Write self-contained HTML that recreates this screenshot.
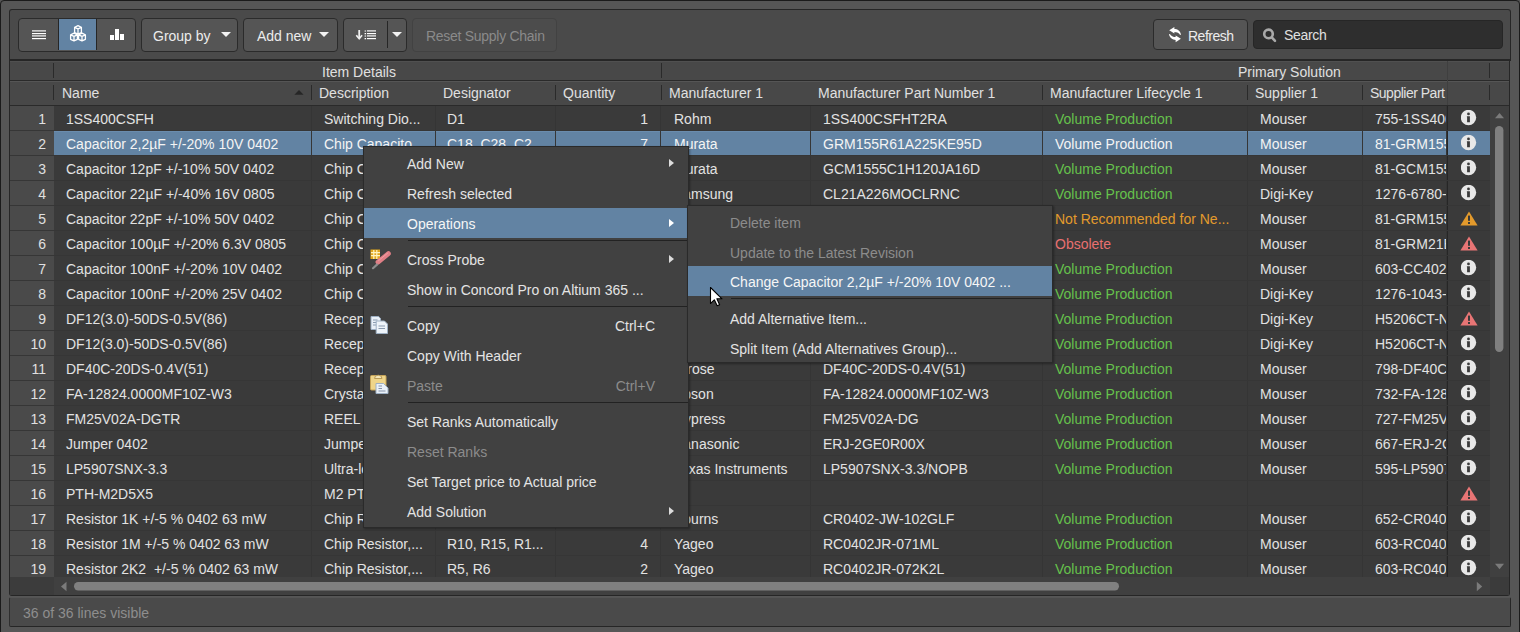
<!DOCTYPE html>
<html><head><meta charset="utf-8">
<style>
*{box-sizing:border-box;margin:0;padding:0}
html,body{width:1520px;height:632px;overflow:hidden;background:#565656;font-family:"Liberation Sans",sans-serif;font-size:14px;color:#e2e2e2}
.abs{position:absolute}
#frame{position:absolute;left:0;top:0;width:1520px;height:700px;border:1px solid #1b1b1b;border-radius:4px;background:#565656}
#tb{position:absolute;left:9px;top:9px;width:1502px;height:52px;background:#4a4a4a;border:1px solid #262626;border-bottom-width:2px;border-radius:3px 3px 0 0}
.btn{position:absolute;background:#555;border:1px solid #2b2b2b;border-radius:4px;color:#ececec;white-space:nowrap;overflow:hidden}
.btn .t{position:absolute;line-height:16px}
.tri{position:absolute;width:0;height:0;border-left:5px solid transparent;border-right:5px solid transparent;border-top:5px solid #f2f2f2}
#tbl{position:absolute;left:9px;top:61px;width:1501px;height:535px;background:#3a3a3a;border:1px solid #262626;border-top:0;border-radius:0 0 3px 3px}
.hdr{position:absolute;left:10px;width:1499px;background:#484848}
.ht{position:absolute;top:81px;height:24px;line-height:25px;white-space:nowrap;overflow:hidden;color:#e0e0e0}
.hdiv{position:absolute;top:85px;width:1px;height:15px;background:#2a2a2a}
.rn{position:absolute;left:10px;width:44px;height:24px;background:#4a4a4a;text-align:right;padding-right:8px;line-height:26px;color:#e0e0e0}
.hl1{position:absolute;left:10px;width:1480px;height:1px;background:#363636}
.c{position:absolute;height:24px;line-height:24px;white-space:nowrap;overflow:hidden;border-right:1px solid #353535}
.c span{position:absolute;left:12px;top:1px}
.c-qty span{left:auto;right:12px}
.c-mfr span{left:13px}
.c-desig span{left:11px}
.c-sp span{left:12px}
.lg{color:#66c24c} .lo{color:#e39a2c} .lr{color:#e87070}
.c.s{background:#6283a3;border-right-color:#363636;color:#f4f4f4;box-shadow:inset 0 1px 0 #6a8cad}
.ic{position:absolute;left:1447px;width:43px;height:24px;background:#3a3a3a;border-left:1px solid #262626}
.ic.s{background:#6283a3}
.ic svg{position:absolute;left:13px;top:4px}
.ic-wo svg,.ic-wr svg{left:12px;top:5px}
.menu{position:absolute;background:#414141;border:1px solid #2a2a2a;box-shadow:1px 1px 2px rgba(0,0,0,0.35)}
.mi{position:absolute;left:0;height:30px;line-height:30px;white-space:nowrap;color:#e4e4e4}
.mi span{position:absolute;top:1px}
.mi.dis{color:#8c8c8c}
.mi.hl{background:#6283a3;color:#f6f6f6}
.sep{position:absolute;height:1px;background:#222}
.hl .arr{border-left-color:#fff}
.arr{position:absolute;width:0;height:0;border-top:4.5px solid transparent;border-bottom:4.5px solid transparent;border-left:5px solid #dcdcdc}
</style></head><body>
<div id="frame"></div>
<div id="tb"></div>
<!-- toolbar buttons -->
<div class="btn" style="left:18px;top:18px;width:118px;height:34px;"></div>
<div class="abs" style="left:59px;top:19px;width:37px;height:31px;background:#6283a3"></div>
<div class="abs" style="left:58px;top:19px;width:1px;height:31px;background:#262626"></div>
<div class="abs" style="left:96px;top:19px;width:1px;height:31px;background:#262626"></div>
<div class="btn" style="left:141px;top:18px;width:97px;height:34px"><span class="t" style="left:11px;top:9px">Group by</span><i class="tri" style="left:79px;top:12.5px"></i></div>
<div class="btn" style="left:243px;top:18px;width:95px;height:34px"><span class="t" style="left:13px;top:9px">Add new</span><i class="tri" style="left:75px;top:12.5px"></i></div>
<div class="btn" style="left:343px;top:18px;width:64px;height:34px"><i class="tri" style="left:48px;top:12.5px"></i></div>
<div class="abs" style="left:387px;top:21px;width:1px;height:27px;background:#262626"></div>
<div class="btn" style="left:412px;top:18px;width:145px;height:34px;background:#4c4c4c;border-color:#424242;color:#8a8a8a"><span class="t" style="left:13px;top:9px;letter-spacing:-0.28px">Reset Supply Chain</span></div>
<div class="btn" style="left:1153px;top:19px;width:95px;height:31px"><span class="t" style="left:34px;top:8px;letter-spacing:-0.5px">Refresh</span></div>
<div class="btn" style="left:1253px;top:20px;width:250px;height:29px;background:#2e2e2e;border-color:#262626;border-radius:4px"><span class="t" style="left:30px;top:6px;color:#e0e0e0;letter-spacing:-0.3px">Search</span></div>

<div id="tbl"></div>
<div class="hdr" style="top:61px;height:19px;border-top:1px solid #505050"></div>
<div class="abs" style="left:10px;top:80px;width:1499px;height:1px;background:#2a2a2a"></div>
<div class="hdr" style="top:81px;height:24px;border-top:1px solid #555"></div>
<div class="abs" style="left:10px;top:105px;width:1499px;height:1px;background:#2a2a2a"></div>
<div class="abs" style="left:322px;top:62px;height:19px;line-height:21px;color:#e0e0e0">Item Details</div>
<div class="abs" style="left:1238px;top:62px;height:19px;line-height:21px;color:#e0e0e0">Primary Solution</div>
<div class="abs" style="left:1447px;top:61px;width:1px;height:44px;background:#3f3f3f"></div>
<div class="hdiv" style="left:661px;top:63px;height:15px"></div>
<div class="hdiv" style="left:53px;top:63px;height:15px"></div>
<div class="hdiv" style="left:1489px;top:63px;height:15px"></div>
<div class="ht" style="left:62px;width:249px">Name</div><div class="ht" style="left:319px;width:116px">Description</div><div class="ht" style="left:443px;width:112px">Designator</div><div class="ht" style="left:563px;width:98px">Quantity</div><div class="ht" style="left:669px;width:141px">Manufacturer 1</div><div class="ht" style="left:818px;width:224px">Manufacturer Part Number 1</div><div class="ht" style="left:1050px;width:197px">Manufacturer Lifecycle 1</div><div class="ht" style="left:1255px;width:107px">Supplier 1</div><div class="ht" style="left:1370px;width:77px;letter-spacing:-0.5px">Supplier Part</div><div class="hdiv" style="left:53px"></div><div class="hdiv" style="left:311px"></div><div class="hdiv" style="left:555px"></div><div class="hdiv" style="left:661px"></div><div class="hdiv" style="left:1042px"></div><div class="hdiv" style="left:1247px"></div><div class="hdiv" style="left:1362px"></div><div class="hdiv" style="left:1489px"></div>
<div id="body" class="abs" style="left:0;top:0;width:1520px;height:577px;overflow:hidden">
<div class="rn" style="top:106px">1</div><div class="hl1" style="top:130px"></div><div class="c c-name" style="left:54px;top:106px;width:258px"><span>1SS400CSFH</span></div><div class="c c-desc" style="left:312px;top:106px;width:124px"><span>Switching Dio...</span></div><div class="c c-desig" style="left:436px;top:106px;width:120px"><span>D1</span></div><div class="c c-qty" style="left:556px;top:106px;width:105px"><span>1</span></div><div class="c c-mfr" style="left:661px;top:106px;width:150px"><span>Rohm</span></div><div class="c c-mpn" style="left:811px;top:106px;width:232px"><span>1SS400CSFHT2RA</span></div><div class="c c-life lg" style="left:1043px;top:106px;width:205px"><span>Volume Production</span></div><div class="c c-sup" style="left:1248px;top:106px;width:115px"><span>Mouser</span></div><div class="c c-sp" style="left:1363px;top:106px;width:84px"><span>755-1SS400CSFHT2RA</span></div><div class="ic ic-i" style="top:106px"><svg width="16" height="16" viewBox="0 0 16 16"><circle cx="7.5" cy="7.5" r="7.7" fill="#e8e8e8"/><circle cx="7.5" cy="3.9" r="1.4" fill="#3a3a3a"/><path d="M5.9 6.2H8.9V12.3H6.1V7.3H5.9Z" fill="#3a3a3a"/></svg></div><div class="rn" style="top:131px">2</div><div class="hl1" style="top:155px"></div><div class="c c-name s" style="left:54px;top:131px;width:258px"><span>Capacitor 2,2µF +/-20% 10V 0402</span></div><div class="c c-desc s" style="left:312px;top:131px;width:124px"><span>Chip Capacito...</span></div><div class="c c-desig s" style="left:436px;top:131px;width:120px"><span>C18, C28, C2...</span></div><div class="c c-qty s" style="left:556px;top:131px;width:105px"><span>7</span></div><div class="c c-mfr s" style="left:661px;top:131px;width:150px"><span>Murata</span></div><div class="c c-mpn s" style="left:811px;top:131px;width:232px"><span>GRM155R61A225KE95D</span></div><div class="c c-life s" style="left:1043px;top:131px;width:205px"><span>Volume Production</span></div><div class="c c-sup s" style="left:1248px;top:131px;width:115px"><span>Mouser</span></div><div class="c c-sp s" style="left:1363px;top:131px;width:84px"><span>81-GRM155R61A225KE95D</span></div><div class="ic ic-i s" style="top:131px"><svg width="16" height="16" viewBox="0 0 16 16"><circle cx="7.5" cy="7.5" r="7.7" fill="#e8e8e8"/><circle cx="7.5" cy="3.9" r="1.4" fill="#3a3a3a"/><path d="M5.9 6.2H8.9V12.3H6.1V7.3H5.9Z" fill="#3a3a3a"/></svg></div><div class="rn" style="top:156px">3</div><div class="hl1" style="top:180px"></div><div class="c c-name" style="left:54px;top:156px;width:258px"><span>Capacitor 12pF +/-10% 50V 0402</span></div><div class="c c-desc" style="left:312px;top:156px;width:124px"><span>Chip Capacitor</span></div><div class="c c-desig" style="left:436px;top:156px;width:120px"><span>C1, C2</span></div><div class="c c-qty" style="left:556px;top:156px;width:105px"><span>2</span></div><div class="c c-mfr" style="left:661px;top:156px;width:150px"><span>Murata</span></div><div class="c c-mpn" style="left:811px;top:156px;width:232px"><span>GCM1555C1H120JA16D</span></div><div class="c c-life lg" style="left:1043px;top:156px;width:205px"><span>Volume Production</span></div><div class="c c-sup" style="left:1248px;top:156px;width:115px"><span>Mouser</span></div><div class="c c-sp" style="left:1363px;top:156px;width:84px"><span>81-GCM1555C1H120JA16D</span></div><div class="ic ic-i" style="top:156px"><svg width="16" height="16" viewBox="0 0 16 16"><circle cx="7.5" cy="7.5" r="7.7" fill="#e8e8e8"/><circle cx="7.5" cy="3.9" r="1.4" fill="#3a3a3a"/><path d="M5.9 6.2H8.9V12.3H6.1V7.3H5.9Z" fill="#3a3a3a"/></svg></div><div class="rn" style="top:181px">4</div><div class="hl1" style="top:205px"></div><div class="c c-name" style="left:54px;top:181px;width:258px"><span>Capacitor 22µF +/-40% 16V 0805</span></div><div class="c c-desc" style="left:312px;top:181px;width:124px"><span>Chip Capacitor</span></div><div class="c c-desig" style="left:436px;top:181px;width:120px"><span>C3</span></div><div class="c c-qty" style="left:556px;top:181px;width:105px"><span>1</span></div><div class="c c-mfr" style="left:661px;top:181px;width:150px"><span>Samsung</span></div><div class="c c-mpn" style="left:811px;top:181px;width:232px"><span>CL21A226MOCLRNC</span></div><div class="c c-life lg" style="left:1043px;top:181px;width:205px"><span>Volume Production</span></div><div class="c c-sup" style="left:1248px;top:181px;width:115px"><span>Digi-Key</span></div><div class="c c-sp" style="left:1363px;top:181px;width:84px"><span>1276-6780-1-ND</span></div><div class="ic ic-i" style="top:181px"><svg width="16" height="16" viewBox="0 0 16 16"><circle cx="7.5" cy="7.5" r="7.7" fill="#e8e8e8"/><circle cx="7.5" cy="3.9" r="1.4" fill="#3a3a3a"/><path d="M5.9 6.2H8.9V12.3H6.1V7.3H5.9Z" fill="#3a3a3a"/></svg></div><div class="rn" style="top:206px">5</div><div class="hl1" style="top:230px"></div><div class="c c-name" style="left:54px;top:206px;width:258px"><span>Capacitor 22pF +/-10% 50V 0402</span></div><div class="c c-desc" style="left:312px;top:206px;width:124px"><span>Chip Capacitor</span></div><div class="c c-desig" style="left:436px;top:206px;width:120px"><span>C4</span></div><div class="c c-qty" style="left:556px;top:206px;width:105px"><span>1</span></div><div class="c c-mfr" style="left:661px;top:206px;width:150px"><span>Murata</span></div><div class="c c-mpn" style="left:811px;top:206px;width:232px"><span>GRM1555C1H220JA01D</span></div><div class="c c-life lo" style="left:1043px;top:206px;width:205px"><span>Not Recommended for Ne...</span></div><div class="c c-sup" style="left:1248px;top:206px;width:115px"><span>Mouser</span></div><div class="c c-sp" style="left:1363px;top:206px;width:84px"><span>81-GRM1555C1H220JA01D</span></div><div class="ic ic-wo" style="top:206px"><svg width="18" height="15" viewBox="0 0 18 15"><path d="M9 0.5L17.6 14.6H0.4z" fill="#e39a2c"/><rect x="8" y="4.6" width="2" height="5.2" fill="#3a3a3a"/><rect x="8" y="11" width="2" height="2" fill="#3a3a3a"/></svg></div><div class="rn" style="top:231px">6</div><div class="hl1" style="top:255px"></div><div class="c c-name" style="left:54px;top:231px;width:258px"><span>Capacitor 100µF +/-20% 6.3V 0805</span></div><div class="c c-desc" style="left:312px;top:231px;width:124px"><span>Chip Capacitor</span></div><div class="c c-desig" style="left:436px;top:231px;width:120px"><span>C5</span></div><div class="c c-qty" style="left:556px;top:231px;width:105px"><span>1</span></div><div class="c c-mfr" style="left:661px;top:231px;width:150px"><span>Murata</span></div><div class="c c-mpn" style="left:811px;top:231px;width:232px"><span>GRM21BR60J107ME15L</span></div><div class="c c-life lr" style="left:1043px;top:231px;width:205px"><span>Obsolete</span></div><div class="c c-sup" style="left:1248px;top:231px;width:115px"><span>Mouser</span></div><div class="c c-sp" style="left:1363px;top:231px;width:84px"><span>81-GRM21BR60J107ME15L</span></div><div class="ic ic-wr" style="top:231px"><svg width="18" height="15" viewBox="0 0 18 15"><path d="M9 0.5L17.6 14.6H0.4z" fill="#e87575"/><rect x="8" y="4.6" width="2" height="5.2" fill="#3a3a3a"/><rect x="8" y="11" width="2" height="2" fill="#3a3a3a"/></svg></div><div class="rn" style="top:256px">7</div><div class="hl1" style="top:280px"></div><div class="c c-name" style="left:54px;top:256px;width:258px"><span>Capacitor 100nF +/-20% 10V 0402</span></div><div class="c c-desc" style="left:312px;top:256px;width:124px"><span>Chip Capacitor</span></div><div class="c c-desig" style="left:436px;top:256px;width:120px"><span>C6</span></div><div class="c c-qty" style="left:556px;top:256px;width:105px"><span>1</span></div><div class="c c-mfr" style="left:661px;top:256px;width:150px"><span>Murata</span></div><div class="c c-mpn" style="left:811px;top:256px;width:232px"><span>CC0402MRX5R6BB104</span></div><div class="c c-life lg" style="left:1043px;top:256px;width:205px"><span>Volume Production</span></div><div class="c c-sup" style="left:1248px;top:256px;width:115px"><span>Mouser</span></div><div class="c c-sp" style="left:1363px;top:256px;width:84px"><span>603-CC402MRX5R6BB104</span></div><div class="ic ic-i" style="top:256px"><svg width="16" height="16" viewBox="0 0 16 16"><circle cx="7.5" cy="7.5" r="7.7" fill="#e8e8e8"/><circle cx="7.5" cy="3.9" r="1.4" fill="#3a3a3a"/><path d="M5.9 6.2H8.9V12.3H6.1V7.3H5.9Z" fill="#3a3a3a"/></svg></div><div class="rn" style="top:281px">8</div><div class="hl1" style="top:305px"></div><div class="c c-name" style="left:54px;top:281px;width:258px"><span>Capacitor 100nF +/-20% 25V 0402</span></div><div class="c c-desc" style="left:312px;top:281px;width:124px"><span>Chip Capacitor</span></div><div class="c c-desig" style="left:436px;top:281px;width:120px"><span>C7</span></div><div class="c c-qty" style="left:556px;top:281px;width:105px"><span>1</span></div><div class="c c-mfr" style="left:661px;top:281px;width:150px"><span>Samsung</span></div><div class="c c-mpn" style="left:811px;top:281px;width:232px"><span>CL05A104MA5NNNC</span></div><div class="c c-life lg" style="left:1043px;top:281px;width:205px"><span>Volume Production</span></div><div class="c c-sup" style="left:1248px;top:281px;width:115px"><span>Digi-Key</span></div><div class="c c-sp" style="left:1363px;top:281px;width:84px"><span>1276-1043-1-ND</span></div><div class="ic ic-i" style="top:281px"><svg width="16" height="16" viewBox="0 0 16 16"><circle cx="7.5" cy="7.5" r="7.7" fill="#e8e8e8"/><circle cx="7.5" cy="3.9" r="1.4" fill="#3a3a3a"/><path d="M5.9 6.2H8.9V12.3H6.1V7.3H5.9Z" fill="#3a3a3a"/></svg></div><div class="rn" style="top:306px">9</div><div class="hl1" style="top:330px"></div><div class="c c-name" style="left:54px;top:306px;width:258px"><span>DF12(3.0)-50DS-0.5V(86)</span></div><div class="c c-desc" style="left:312px;top:306px;width:124px"><span>Receptacle</span></div><div class="c c-desig" style="left:436px;top:306px;width:120px"><span>J1</span></div><div class="c c-qty" style="left:556px;top:306px;width:105px"><span>1</span></div><div class="c c-mfr" style="left:661px;top:306px;width:150px"><span>Hirose</span></div><div class="c c-mpn" style="left:811px;top:306px;width:232px"><span>DF12(3.0)-50DS-0.5V(86)</span></div><div class="c c-life lg" style="left:1043px;top:306px;width:205px"><span>Volume Production</span></div><div class="c c-sup" style="left:1248px;top:306px;width:115px"><span>Digi-Key</span></div><div class="c c-sp" style="left:1363px;top:306px;width:84px"><span>H5206CT-ND</span></div><div class="ic ic-wr" style="top:306px"><svg width="18" height="15" viewBox="0 0 18 15"><path d="M9 0.5L17.6 14.6H0.4z" fill="#e87575"/><rect x="8" y="4.6" width="2" height="5.2" fill="#3a3a3a"/><rect x="8" y="11" width="2" height="2" fill="#3a3a3a"/></svg></div><div class="rn" style="top:331px">10</div><div class="hl1" style="top:355px"></div><div class="c c-name" style="left:54px;top:331px;width:258px"><span>DF12(3.0)-50DS-0.5V(86)</span></div><div class="c c-desc" style="left:312px;top:331px;width:124px"><span>Receptacle</span></div><div class="c c-desig" style="left:436px;top:331px;width:120px"><span>J2</span></div><div class="c c-qty" style="left:556px;top:331px;width:105px"><span>1</span></div><div class="c c-mfr" style="left:661px;top:331px;width:150px"><span>Hirose</span></div><div class="c c-mpn" style="left:811px;top:331px;width:232px"><span>DF12(3.0)-50DS-0.5V(86)</span></div><div class="c c-life lg" style="left:1043px;top:331px;width:205px"><span>Volume Production</span></div><div class="c c-sup" style="left:1248px;top:331px;width:115px"><span>Digi-Key</span></div><div class="c c-sp" style="left:1363px;top:331px;width:84px"><span>H5206CT-ND</span></div><div class="ic ic-i" style="top:331px"><svg width="16" height="16" viewBox="0 0 16 16"><circle cx="7.5" cy="7.5" r="7.7" fill="#e8e8e8"/><circle cx="7.5" cy="3.9" r="1.4" fill="#3a3a3a"/><path d="M5.9 6.2H8.9V12.3H6.1V7.3H5.9Z" fill="#3a3a3a"/></svg></div><div class="rn" style="top:356px">11</div><div class="hl1" style="top:380px"></div><div class="c c-name" style="left:54px;top:356px;width:258px"><span>DF40C-20DS-0.4V(51)</span></div><div class="c c-desc" style="left:312px;top:356px;width:124px"><span>Receptacle</span></div><div class="c c-desig" style="left:436px;top:356px;width:120px"><span>J3</span></div><div class="c c-qty" style="left:556px;top:356px;width:105px"><span>1</span></div><div class="c c-mfr" style="left:661px;top:356px;width:150px"><span>Hirose</span></div><div class="c c-mpn" style="left:811px;top:356px;width:232px"><span>DF40C-20DS-0.4V(51)</span></div><div class="c c-life lg" style="left:1043px;top:356px;width:205px"><span>Volume Production</span></div><div class="c c-sup" style="left:1248px;top:356px;width:115px"><span>Mouser</span></div><div class="c c-sp" style="left:1363px;top:356px;width:84px"><span>798-DF40C-20DS-0.4V51</span></div><div class="ic ic-i" style="top:356px"><svg width="16" height="16" viewBox="0 0 16 16"><circle cx="7.5" cy="7.5" r="7.7" fill="#e8e8e8"/><circle cx="7.5" cy="3.9" r="1.4" fill="#3a3a3a"/><path d="M5.9 6.2H8.9V12.3H6.1V7.3H5.9Z" fill="#3a3a3a"/></svg></div><div class="rn" style="top:381px">12</div><div class="hl1" style="top:405px"></div><div class="c c-name" style="left:54px;top:381px;width:258px"><span>FA-12824.0000MF10Z-W3</span></div><div class="c c-desc" style="left:312px;top:381px;width:124px"><span>Crystal</span></div><div class="c c-desig" style="left:436px;top:381px;width:120px"><span>Y1</span></div><div class="c c-qty" style="left:556px;top:381px;width:105px"><span>1</span></div><div class="c c-mfr" style="left:661px;top:381px;width:150px"><span>Epson</span></div><div class="c c-mpn" style="left:811px;top:381px;width:232px"><span>FA-12824.0000MF10Z-W3</span></div><div class="c c-life lg" style="left:1043px;top:381px;width:205px"><span>Volume Production</span></div><div class="c c-sup" style="left:1248px;top:381px;width:115px"><span>Mouser</span></div><div class="c c-sp" style="left:1363px;top:381px;width:84px"><span>732-FA-128MF10ZW3</span></div><div class="ic ic-i" style="top:381px"><svg width="16" height="16" viewBox="0 0 16 16"><circle cx="7.5" cy="7.5" r="7.7" fill="#e8e8e8"/><circle cx="7.5" cy="3.9" r="1.4" fill="#3a3a3a"/><path d="M5.9 6.2H8.9V12.3H6.1V7.3H5.9Z" fill="#3a3a3a"/></svg></div><div class="rn" style="top:406px">13</div><div class="hl1" style="top:430px"></div><div class="c c-name" style="left:54px;top:406px;width:258px"><span>FM25V02A-DGTR</span></div><div class="c c-desc" style="left:312px;top:406px;width:124px"><span>REEL / F-RAM</span></div><div class="c c-desig" style="left:436px;top:406px;width:120px"><span>U1</span></div><div class="c c-qty" style="left:556px;top:406px;width:105px"><span>1</span></div><div class="c c-mfr" style="left:661px;top:406px;width:150px"><span>Cypress</span></div><div class="c c-mpn" style="left:811px;top:406px;width:232px"><span>FM25V02A-DG</span></div><div class="c c-life lg" style="left:1043px;top:406px;width:205px"><span>Volume Production</span></div><div class="c c-sup" style="left:1248px;top:406px;width:115px"><span>Mouser</span></div><div class="c c-sp" style="left:1363px;top:406px;width:84px"><span>727-FM25V02A-DG</span></div><div class="ic ic-i" style="top:406px"><svg width="16" height="16" viewBox="0 0 16 16"><circle cx="7.5" cy="7.5" r="7.7" fill="#e8e8e8"/><circle cx="7.5" cy="3.9" r="1.4" fill="#3a3a3a"/><path d="M5.9 6.2H8.9V12.3H6.1V7.3H5.9Z" fill="#3a3a3a"/></svg></div><div class="rn" style="top:431px">14</div><div class="hl1" style="top:455px"></div><div class="c c-name" style="left:54px;top:431px;width:258px"><span>Jumper 0402</span></div><div class="c c-desc" style="left:312px;top:431px;width:124px"><span>Jumper</span></div><div class="c c-desig" style="left:436px;top:431px;width:120px"><span>R1</span></div><div class="c c-qty" style="left:556px;top:431px;width:105px"><span>1</span></div><div class="c c-mfr" style="left:661px;top:431px;width:150px"><span>Panasonic</span></div><div class="c c-mpn" style="left:811px;top:431px;width:232px"><span>ERJ-2GE0R00X</span></div><div class="c c-life lg" style="left:1043px;top:431px;width:205px"><span>Volume Production</span></div><div class="c c-sup" style="left:1248px;top:431px;width:115px"><span>Mouser</span></div><div class="c c-sp" style="left:1363px;top:431px;width:84px"><span>667-ERJ-2GE0R00X</span></div><div class="ic ic-i" style="top:431px"><svg width="16" height="16" viewBox="0 0 16 16"><circle cx="7.5" cy="7.5" r="7.7" fill="#e8e8e8"/><circle cx="7.5" cy="3.9" r="1.4" fill="#3a3a3a"/><path d="M5.9 6.2H8.9V12.3H6.1V7.3H5.9Z" fill="#3a3a3a"/></svg></div><div class="rn" style="top:456px">15</div><div class="hl1" style="top:480px"></div><div class="c c-name" style="left:54px;top:456px;width:258px"><span>LP5907SNX-3.3</span></div><div class="c c-desc" style="left:312px;top:456px;width:124px"><span>Ultra-low noise LDO</span></div><div class="c c-desig" style="left:436px;top:456px;width:120px"><span>U2</span></div><div class="c c-qty" style="left:556px;top:456px;width:105px"><span>1</span></div><div class="c c-mfr" style="left:661px;top:456px;width:150px"><span>Texas Instruments</span></div><div class="c c-mpn" style="left:811px;top:456px;width:232px"><span>LP5907SNX-3.3/NOPB</span></div><div class="c c-life lg" style="left:1043px;top:456px;width:205px"><span>Volume Production</span></div><div class="c c-sup" style="left:1248px;top:456px;width:115px"><span>Mouser</span></div><div class="c c-sp" style="left:1363px;top:456px;width:84px"><span>595-LP5907SNX-3.3NOPB</span></div><div class="ic ic-i" style="top:456px"><svg width="16" height="16" viewBox="0 0 16 16"><circle cx="7.5" cy="7.5" r="7.7" fill="#e8e8e8"/><circle cx="7.5" cy="3.9" r="1.4" fill="#3a3a3a"/><path d="M5.9 6.2H8.9V12.3H6.1V7.3H5.9Z" fill="#3a3a3a"/></svg></div><div class="rn" style="top:481px">16</div><div class="hl1" style="top:505px"></div><div class="c c-name" style="left:54px;top:481px;width:258px"><span>PTH-M2D5X5</span></div><div class="c c-desc" style="left:312px;top:481px;width:124px"><span>M2 PTH</span></div><div class="c c-desig" style="left:436px;top:481px;width:120px"><span>H1</span></div><div class="c c-qty" style="left:556px;top:481px;width:105px"><span>1</span></div><div class="c c-mfr" style="left:661px;top:481px;width:150px"><span></span></div><div class="c c-mpn" style="left:811px;top:481px;width:232px"><span></span></div><div class="c c-life lg" style="left:1043px;top:481px;width:205px"><span></span></div><div class="c c-sup" style="left:1248px;top:481px;width:115px"><span></span></div><div class="c c-sp" style="left:1363px;top:481px;width:84px"><span></span></div><div class="ic ic-wr" style="top:481px"><svg width="18" height="15" viewBox="0 0 18 15"><path d="M9 0.5L17.6 14.6H0.4z" fill="#e87575"/><rect x="8" y="4.6" width="2" height="5.2" fill="#3a3a3a"/><rect x="8" y="11" width="2" height="2" fill="#3a3a3a"/></svg></div><div class="rn" style="top:506px">17</div><div class="hl1" style="top:530px"></div><div class="c c-name" style="left:54px;top:506px;width:258px"><span>Resistor 1K +/-5 % 0402 63 mW</span></div><div class="c c-desc" style="left:312px;top:506px;width:124px"><span>Chip Resistor</span></div><div class="c c-desig" style="left:436px;top:506px;width:120px"><span>R2</span></div><div class="c c-qty" style="left:556px;top:506px;width:105px"><span>1</span></div><div class="c c-mfr" style="left:661px;top:506px;width:150px"><span>Bourns</span></div><div class="c c-mpn" style="left:811px;top:506px;width:232px"><span>CR0402-JW-102GLF</span></div><div class="c c-life lg" style="left:1043px;top:506px;width:205px"><span>Volume Production</span></div><div class="c c-sup" style="left:1248px;top:506px;width:115px"><span>Mouser</span></div><div class="c c-sp" style="left:1363px;top:506px;width:84px"><span>652-CR0402-JW-102GLF</span></div><div class="ic ic-i" style="top:506px"><svg width="16" height="16" viewBox="0 0 16 16"><circle cx="7.5" cy="7.5" r="7.7" fill="#e8e8e8"/><circle cx="7.5" cy="3.9" r="1.4" fill="#3a3a3a"/><path d="M5.9 6.2H8.9V12.3H6.1V7.3H5.9Z" fill="#3a3a3a"/></svg></div><div class="rn" style="top:531px">18</div><div class="hl1" style="top:555px"></div><div class="c c-name" style="left:54px;top:531px;width:258px"><span>Resistor 1M +/-5 % 0402 63 mW</span></div><div class="c c-desc" style="left:312px;top:531px;width:124px"><span>Chip Resistor,...</span></div><div class="c c-desig" style="left:436px;top:531px;width:120px"><span>R10, R15, R1...</span></div><div class="c c-qty" style="left:556px;top:531px;width:105px"><span>4</span></div><div class="c c-mfr" style="left:661px;top:531px;width:150px"><span>Yageo</span></div><div class="c c-mpn" style="left:811px;top:531px;width:232px"><span>RC0402JR-071ML</span></div><div class="c c-life lg" style="left:1043px;top:531px;width:205px"><span>Volume Production</span></div><div class="c c-sup" style="left:1248px;top:531px;width:115px"><span>Mouser</span></div><div class="c c-sp" style="left:1363px;top:531px;width:84px"><span>603-RC0402JR-071ML</span></div><div class="ic ic-i" style="top:531px"><svg width="16" height="16" viewBox="0 0 16 16"><circle cx="7.5" cy="7.5" r="7.7" fill="#e8e8e8"/><circle cx="7.5" cy="3.9" r="1.4" fill="#3a3a3a"/><path d="M5.9 6.2H8.9V12.3H6.1V7.3H5.9Z" fill="#3a3a3a"/></svg></div><div class="rn" style="top:556px">19</div><div class="hl1" style="top:580px"></div><div class="c c-name" style="left:54px;top:556px;width:258px"><span>Resistor 2K2 &nbsp;+/-5 % 0402 63 mW</span></div><div class="c c-desc" style="left:312px;top:556px;width:124px"><span>Chip Resistor,...</span></div><div class="c c-desig" style="left:436px;top:556px;width:120px"><span>R5, R6</span></div><div class="c c-qty" style="left:556px;top:556px;width:105px"><span>2</span></div><div class="c c-mfr" style="left:661px;top:556px;width:150px"><span>Yageo</span></div><div class="c c-mpn" style="left:811px;top:556px;width:232px"><span>RC0402JR-072K2L</span></div><div class="c c-life lg" style="left:1043px;top:556px;width:205px"><span>Volume Production</span></div><div class="c c-sup" style="left:1248px;top:556px;width:115px"><span>Mouser</span></div><div class="c c-sp" style="left:1363px;top:556px;width:84px"><span>603-RC0402JR-072K2L</span></div><div class="ic ic-i" style="top:556px"><svg width="16" height="16" viewBox="0 0 16 16"><circle cx="7.5" cy="7.5" r="7.7" fill="#e8e8e8"/><circle cx="7.5" cy="3.9" r="1.4" fill="#3a3a3a"/><path d="M5.9 6.2H8.9V12.3H6.1V7.3H5.9Z" fill="#3a3a3a"/></svg></div>
</div>

<!-- icons toolbar -->
<svg class="abs" style="left:0;top:0" width="420" height="60">
 <defs><linearGradient id="lg1" x1="0" y1="0" x2="0" y2="1"><stop offset="0" stop-color="#d8d8d8"/><stop offset="1" stop-color="#9a9a9a"/></linearGradient></defs>
 <rect x="32" y="30" width="14" height="2" fill="url(#lg1)"/><rect x="32" y="33" width="14" height="1.2" fill="#fff"/>
 <rect x="32" y="35" width="14" height="2" fill="url(#lg1)"/><rect x="32" y="38" width="14" height="1.2" fill="#fff"/>
 <g fill="none" stroke="#fff" stroke-width="1.3" stroke-linejoin="round">
  <path d="M74.6 27.3L78 25.7L81.4 27.3V32.6L78 34.2L74.6 32.6Z M74.6 27.3L78 28.9L81.4 27.3 M78 28.9V34.2"/>
  <path d="M70.6 34.8L74 33.2L77.4 34.8V39.3L74 40.9L70.6 39.3Z M70.6 34.8L74 36.4L77.4 34.8 M74 36.4V40.9"/>
  <path d="M78.6 34.8L82 33.2L85.4 34.8V39.3L82 40.9L78.6 39.3Z M78.6 34.8L82 36.4L85.4 34.8 M82 36.4V40.9"/>
 </g>
 <rect x="110" y="35" width="4" height="5" fill="#fff"/><rect x="115" y="29" width="4" height="11" fill="#fff"/><rect x="120" y="34" width="4" height="6" fill="#fff"/>
 <path d="M359.2 30V38" stroke="#f0f0f0" stroke-width="1.8"/><path d="M356.3 35.2L359.2 38.8L362.1 35.2" fill="none" stroke="#f0f0f0" stroke-width="1.6" stroke-linejoin="round"/>
 <rect x="364.6" y="30.3" width="1.5" height="1.5" fill="#ccc"/><rect x="364.6" y="33" width="1.5" height="1.3" fill="#fff"/>
 <rect x="364.6" y="35.3" width="1.5" height="1.5" fill="#ccc"/><rect x="364.6" y="38" width="1.5" height="1.3" fill="#fff"/>
 <rect x="367" y="30" width="9" height="2" fill="url(#lg1)"/><rect x="367" y="33" width="9" height="1.2" fill="#fff"/>
 <rect x="367" y="35" width="9" height="2" fill="url(#lg1)"/><rect x="367" y="38" width="9" height="1.2" fill="#fff"/>
</svg>
<svg class="abs" style="left:1164px;top:24px" width="22" height="22">
 <path d="M5.2 6.3L10.4 2.9L10.4 9.4Z" fill="#fff"/>
 <path d="M10 4.9C13.8 4.9 16.4 6.9 17 10.6L16.1 10.9C15.2 8.8 13.2 7.9 10 7.9Z" fill="#fff"/>
 <path d="M16.9 14.7L11.6 11.4L11.6 18.2Z" fill="#fff"/>
 <path d="M5 10.2C5.6 13.6 8.2 15.9 12 15.9L12 13C9.2 13 6.8 12 5.9 9.9Z" fill="#fff"/>
</svg>
<svg class="abs" style="left:1258px;top:24px" width="22" height="22">
 <circle cx="10.5" cy="9.9" r="4.3" fill="none" stroke="#a9a9a9" stroke-width="2.6"/>
 <path d="M14 13.6L17 16.8" stroke="#a9a9a9" stroke-width="2.6" stroke-linecap="round"/>
</svg>
<!-- sort triangle in Name header -->
<svg class="abs" style="left:290px;top:86px" width="20" height="12"><path d="M4.4 8.8L9 4L13.6 8.8Z" fill="#262626"/></svg>

<!-- vertical scrollbar -->
<div class="abs" style="left:1490px;top:106px;width:19px;height:471px;background:#404040"></div>
<svg class="abs" style="left:1490px;top:106px" width="19" height="471">
 <path d="M5 12.2L9.5 7L14 12.2Z" fill="#7b7b7b"/>
 <rect x="5" y="20" width="8.4" height="226" rx="4.2" fill="#808080"/>
 <path d="M5 457.8L9.5 463.2L14 457.8Z" fill="#7b7b7b"/>
</svg>
<!-- horizontal scrollbar -->
<div class="abs" style="left:10px;top:577px;width:44px;height:18px;background:#3c3c3c"></div>
<div class="abs" style="left:54px;top:577px;width:1436px;height:18px;background:#404040"></div>
<div class="abs" style="left:1490px;top:577px;width:19px;height:18px;background:#3b3b3b"></div>
<svg class="abs" style="left:54px;top:577px" width="1436" height="18">
 <path d="M12.5 4.8L7 9.5L12.5 14.3Z" fill="#7b7b7b"/>
 <rect x="20" y="5" width="1045" height="8.4" rx="4.2" fill="#808080"/>
 <path d="M1422.8 4.8L1428.2 9.5L1422.8 14.3Z" fill="#7b7b7b"/>
</svg>
<!-- status bar -->
<div class="abs" style="left:9px;top:597px;width:1502px;height:30px;background:#4a4a4a;border:1px solid #262626;border-top-color:#545454;border-left-color:#2e2e2e;border-radius:2px"></div>
<div class="abs" style="left:23px;top:604px;line-height:18px;color:#8e8e8e">36 of 36 lines visible</div>

<div class="menu" style="left:363px;top:146px;width:326px;height:382px"><div class="mi" style="top:1px;width:324px"><span style="left:43px">Add New</span><i class="arr" style="left:305px;top:11px"></i></div><div class="mi" style="top:31px;width:324px"><span style="left:43px">Refresh selected</span></div><div class="mi hl" style="top:61px;width:324px"><span style="left:43px">Operations</span><i class="arr" style="left:305px;top:11px"></i></div><div class="mi" style="top:97px;width:324px"><span style="left:43px">Cross Probe</span><i class="arr" style="left:305px;top:11px"></i></div><div class="mi" style="top:127px;width:324px"><span style="left:43px">Show in Concord Pro on Altium 365 ...</span></div><div class="mi" style="top:163px;width:324px"><span style="left:43px">Copy</span><span class="sc" style="right:33px">Ctrl+C</span></div><div class="mi" style="top:193px;width:324px"><span style="left:43px">Copy With Header</span></div><div class="mi dis" style="top:223px;width:324px"><span style="left:43px">Paste</span><span class="sc" style="right:33px">Ctrl+V</span></div><div class="mi" style="top:259px;width:324px"><span style="left:43px">Set Ranks Automatically</span></div><div class="mi dis" style="top:289px;width:324px"><span style="left:43px">Reset Ranks</span></div><div class="mi" style="top:319px;width:324px"><span style="left:43px">Set Target price to Actual price</span></div><div class="mi" style="top:349px;width:324px"><span style="left:43px">Add Solution</span><i class="arr" style="left:305px;top:11px"></i></div><div class="sep" style="top:93px;left:44px;width:280px"></div><div class="sep" style="top:159px;left:44px;width:280px"></div><div class="sep" style="top:255px;left:44px;width:280px"></div></div>
<div class="menu" style="left:687px;top:205px;width:366px;height:158px"><div class="mi dis" style="top:1px;width:364px"><span style="left:42px">Delete item</span></div><div class="mi dis" style="top:31px;width:364px"><span style="left:42px">Update to the Latest Revision</span></div><div class="mi hl" style="top:60px;width:364px"><span style="left:42px">Change Capacitor 2,2µF +/-20% 10V 0402 ...</span></div><div class="mi" style="top:97px;width:364px"><span style="left:42px">Add Alternative Item...</span></div><div class="mi" style="top:127px;width:364px"><span style="left:42px">Split Item (Add Alternatives Group)...</span></div><div class="sep" style="top:92px;left:43px;width:322px"></div></div>

<svg class="abs" style="left:363px;top:146px" width="40" height="260">
 <g transform="translate(0,0)">
  <rect x="7.5" y="103.5" width="9.5" height="9.5" fill="#e2a71c"/>
  <path d="M8 106.6H17M8 109.6H17M10.8 104V113M13.8 104V113" stroke="#fff3c0" stroke-width="1.2"/>
  <path d="M15 116.2L25.4 107.6" stroke="#e07f86" stroke-width="4.8" stroke-linecap="round"/><path d="M15.6 114.6L24.6 107.2" stroke="#eea0a4" stroke-width="1" stroke-linecap="round"/>
  <path d="M10 122.2L14 118.6" stroke="#8d8d8d" stroke-width="2.2" stroke-linecap="round"/>
 </g>
 <g>
  <path d="M8 170.5H15.6L17.5 172.4V183.5H8Z" fill="#e9f0f8" stroke="#9eb0c4" stroke-width="1"/>
  <path d="M10 174H14.5M10 176.5H14.5M10 179H14.5" stroke="#8a9bb0" stroke-width="1"/>
  <path d="M13.2 175H21.5L24.5 178V187.5H13.2Z" fill="#eef4fa" stroke="#9eb0c4" stroke-width="1"/>
  <path d="M15.5 180H22M15.5 182.5H22" stroke="#8a9bb0" stroke-width="1"/>
 </g>
 <g>
  <rect x="7.5" y="229.5" width="15.5" height="14.5" rx="1" fill="#efd58a" stroke="#c6a459" stroke-width="1"/>
  <path d="M11.5 232.5Q11.5 229.2 15.2 229.2Q19 229.2 19 232.5Z" fill="#f4e6b8" stroke="#b89a58" stroke-width="1"/>
  <path d="M13 237.5H20.5L25 242V247.5H13Z" fill="#eaf1f9" stroke="#9eb0c4" stroke-width="1"/>
  <path d="M15.5 240H19M15.5 242.5H19M15.5 245H22.5" stroke="#8592a8" stroke-width="1"/>
 </g>
</svg>
<svg class="abs" style="left:709px;top:286px" width="14" height="22">
 <path d="M1.5 1.5V17.5L5.3 13.8L8.2 19.8L10.6 18.8L7.9 12.8H13Z" fill="#fff" stroke="#000" stroke-width="1.1" stroke-linejoin="round"/>
</svg>
</body></html>
